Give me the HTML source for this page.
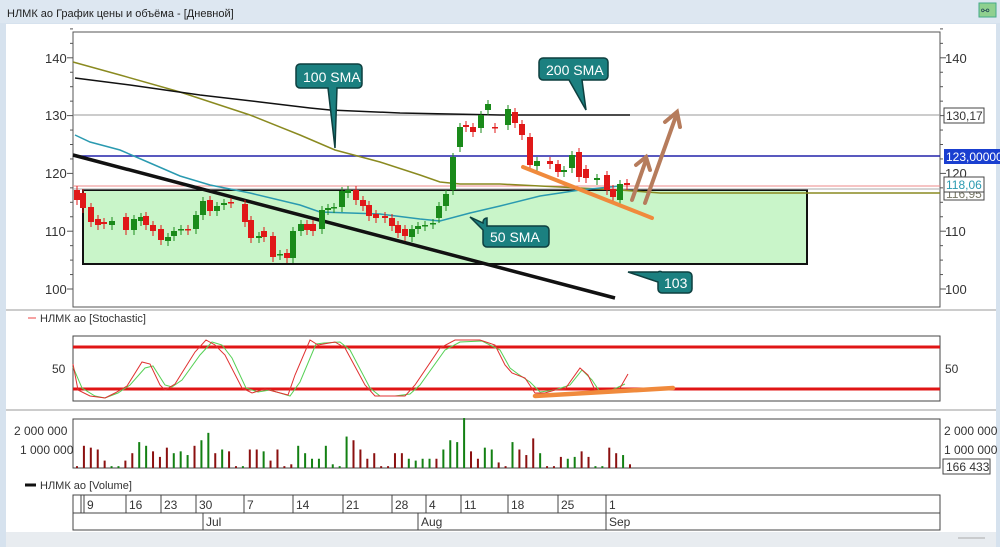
<!DOCTYPE html>
<html><head><meta charset="utf-8">
<style>
body{margin:0;width:1000px;height:547px;overflow:hidden;background:#d9e4ef;font-family:"Liberation Sans","Noto Sans CJK SC",sans-serif;}
svg{position:absolute;left:0;top:0}
</style></head><body>
<svg id="s" width="1000" height="547" viewBox="0 0 1000 547" font-family="Liberation Sans, sans-serif">
<rect x="0" y="0" width="1000" height="547" fill="#d6e2ee"/>
<rect x="0" y="0" width="1000" height="23" fill="#dde7f1"/>
<text x="7" y="17" font-size="11" fill="#222">НЛМК ао График цены и объёма - [Дневной]</text>
<rect x="979" y="3" width="17" height="14" fill="#8fd08f" stroke="#4a8" />
<text x="981" y="14" font-size="10" fill="#245">⚯</text>
<rect x="6" y="24" width="990" height="508" fill="#fff"/>
<rect x="6" y="532" width="990" height="15" fill="#e8ecf0"/>
<line x1="958" y1="538" x2="985" y2="538" stroke="#aaa"/>
<!-- main chart -->
<rect x="73" y="32" width="867" height="275" fill="#fff" stroke="#555" stroke-width="1"/>
<line x1="6" y1="310" x2="996" y2="310" stroke="#ccc" stroke-width="2"/>
<line x1="6" y1="410" x2="996" y2="410" stroke="#ccc" stroke-width="2"/>
<g font-size="13" fill="#333">
<text x="45" y="63">140</text><text x="45" y="120">130</text><text x="45" y="178">120</text><text x="45" y="236">110</text><text x="45" y="294">100</text>
<text x="945" y="63">140</text><text x="945" y="178">120</text><text x="945" y="236">110</text><text x="945" y="294">100</text>
</g>
<g id="ticks" stroke="#555"></g>
<rect x="83" y="190" width="724" height="74" fill="#c9f5c9" stroke="#111" stroke-width="2"/>
<line x1="73" y1="115" x2="940" y2="115" stroke="#999"/>
<line x1="73" y1="156" x2="940" y2="156" stroke="#2222aa" stroke-width="1.5"/>
<line x1="73" y1="186" x2="940" y2="186" stroke="#e88" stroke-width="1"/>
<line x1="73" y1="189" x2="940" y2="189" stroke="#aaa" stroke-width="1"/>
<polyline fill="none" stroke="#8a8a20" stroke-width="1.5" points="73,62 120,75 180,92 250,115 300,135 335,150 380,162 420,175 440,182 460,184 500,184 540,186 580,188 620,190 660,193 940,193"/>
<polyline fill="none" stroke="#111" stroke-width="1.5" points="75,78 130,85 200,95 260,102 310,108 330,110 400,113 500,115 630,115"/>
<polyline fill="none" stroke="#2a9ab0" stroke-width="1.5" points="75,135 90,142 120,150 150,163 180,176 210,185 250,193 300,205 320,212 380,214 420,219 440,221 470,213 500,206 540,196 580,190 620,186"/>
<line x1="73" y1="155" x2="615" y2="298" stroke="#111" stroke-width="3.5"/>
<g id="candles"></g>
<line x1="523" y1="167" x2="652" y2="218" stroke="#f08a3c" stroke-width="4" stroke-linecap="round"/>
<g stroke="#b67c5c" stroke-width="4" fill="none" stroke-linecap="round">
<line x1="632" y1="200" x2="646" y2="160"/><polyline points="636,165 646,157 650,170"/>
<line x1="645" y1="203" x2="676" y2="116"/><polyline points="665,122 677,112 680,127"/>
</g>
<!-- callouts -->
<g fill="#1b8080" stroke="#0d3f3f" stroke-width="1.5">
<path d="M300,64 h58 a4,4 0 0 1 4,4 v16 a4,4 0 0 1 -4,4 h-21 l-2,60 l-7,-60 h-28 a4,4 0 0 1 -4,-4 v-16 a4,4 0 0 1 4,-4z"/>
<path d="M543,58 h61 a4,4 0 0 1 4,4 v14 a4,4 0 0 1 -4,4 h-22 l4,30 l-17,-30 h-26 a4,4 0 0 1 -4,-4 v-14 a4,4 0 0 1 4,-4z"/>
<path d="M487,226 h58 a4,4 0 0 1 4,4 v13 a4,4 0 0 1 -4,4 h-58 a4,4 0 0 1 -4,-4 v-13 l-13,-13 l13,6 v-1 a4,4 0 0 1 4,-4z"/>
<path d="M662,272 h26 a4,4 0 0 1 4,4 v13 a4,4 0 0 1 -4,4 h-26 a4,4 0 0 1 -4,-4 v-7 l-30,-10 h30 a4,4 0 0 1 4,0z"/>
</g>
<g fill="#fff" font-size="14">
<text x="303" y="82">100 SMA</text><text x="546" y="75">200 SMA</text><text x="490" y="242">50 SMA</text><text x="664" y="288">103</text>
</g>
<g font-size="12">
<rect x="944" y="108" width="40" height="15" fill="#fff" stroke="#444"/><text x="946" y="120" fill="#333">130,17</text>
<rect x="944" y="149" width="56" height="15" fill="#1a3fd0"/><text x="946" y="161" fill="#fff">123,00000</text>
<rect x="944" y="186" width="40" height="14" fill="#fff" stroke="#444"/><text x="946" y="198" fill="#776">116,95</text>
<rect x="944" y="177" width="40" height="15" fill="#fff" stroke="#444"/><text x="946" y="189" fill="#2a9ab0">118,06</text>
</g>
<!-- stochastic -->
<line x1="28" y1="318" x2="36" y2="318" stroke="#e44"/>
<text x="40" y="322" font-size="11" fill="#333">НЛМК ао [Stochastic]</text>
<rect x="73" y="336" width="867" height="65" fill="#fff" stroke="#444"/>
<line x1="73" y1="347" x2="940" y2="347" stroke="#e01515" stroke-width="3"/>
<line x1="73" y1="389" x2="940" y2="389" stroke="#e01515" stroke-width="3"/>
<text x="52" y="373" font-size="12" fill="#333">50</text><text x="945" y="373" font-size="12" fill="#333">50</text>
<polyline fill="none" stroke="#55d055" stroke-width="1" points="73,367 82,388 95,396 105,398 118,393 130,385 145,368 153,366 165,385 172,387 182,380 200,355 212,342 222,345 232,358 246,388 258,392 270,390 290,396 300,382 316,344 324,343 340,342 350,350 370,388 380,396 395,396 410,394 420,385 445,350 460,342 482,341 500,350 510,368 518,374 530,382 540,392 555,390 570,385 582,370 592,380 600,392 612,390 625,384"/>
<polyline fill="none" stroke="#e03030" stroke-width="1" points="73,364 78,390 90,396 105,398 115,393 127,386 142,362 150,364 160,385 165,390 175,384 195,352 206,340 215,345 225,355 242,388 252,393 265,389 288,395 295,375 310,340 318,345 335,342 345,348 365,385 375,396 390,396 405,396 415,385 440,348 455,340 480,340 495,345 505,365 512,373 525,378 535,393 545,393 555,390 565,389 580,368 588,375 595,390 605,392 620,388 628,374"/>
<line x1="535" y1="396" x2="673" y2="388" stroke="#f08a3c" stroke-width="4.5" stroke-linecap="round"/>
<!-- volume -->
<rect x="73" y="419" width="867" height="49" fill="#fff" stroke="#444"/>
<g font-size="12" fill="#333"><text x="14" y="435">2 000 000</text><text x="20" y="454">1 000 000</text>
<text x="944" y="435">2 000 000</text><text x="944" y="454">1 000 000</text></g>
<rect x="943" y="459" width="47" height="15" fill="#fff" stroke="#444"/><text x="946" y="471" font-size="12" fill="#333">166 433</text>
<g id="vol"></g>
<line x1="25" y1="485" x2="36" y2="485" stroke="#111" stroke-width="3"/>
<text x="40" y="489" font-size="11" fill="#333">НЛМК ао [Volume]</text>
<!-- dates -->
<rect x="73" y="495" width="867" height="35" fill="#fff" stroke="#444"/>
<line x1="73" y1="513" x2="940" y2="513" stroke="#444"/>
<g id="dates" font-size="12" fill="#333" stroke="none"></g>
</svg>
<script>
var NS="http://www.w3.org/2000/svg";
function el(p,t,a){var e=document.createElementNS(NS,t);for(var k in a)e.setAttribute(k,a[k]);document.getElementById(p).appendChild(e);return e;}
for(var v=100;v<=145;v+=2.5){var y=289-(v-100)*5.78;var L=(v%10==0)?6:3;el('ticks','line',{x1:73-L,x2:73,y1:y,y2:y});el('ticks','line',{x1:940,x2:940+L,y1:y,y2:y});}
var c=[[77,'r',190,200],[83,'r',193,208],[91,'r',207,222],[98,'r',219,225],[104,'r',222,224],[112,'g',221,225],[126,'r',217,230],[134,'g',219,230],[141,'g',217,221],[146,'r',216,225],[153,'r',225,231],[161,'r',229,240],[168,'g',237,241],[174,'g',231,236],[181,'g',229,230],[188,'r',229,230],[196,'g',215,229],[203,'g',201,215],[210,'r',200,211],[217,'g',206,211],[224,'g',203,205],[231,'r',202,203],[245,'r',204,222],[251,'r',220,238],[259,'g',236,238],[264,'r',231,237],[273,'r',236,257],[280,'g',254,255],[287,'r',253,258],[293,'g',231,258],[301,'g',224,231],[307,'r',224,230],[313,'r',224,231],[322,'g',210,229],[328,'g',208,210],[334,'g',207,208],[342,'g',191,207],[348,'g',190,193],[356,'r',190,200],[363,'r',200,206],[369,'r',205,216],[376,'r',214,218],[385,'r',216,218],[392,'r',218,226],[398,'r',225,233],[405,'r',229,236],[412,'g',229,237],[418,'g',226,229],[425,'g',225,226],[433,'g',223,224],[439,'g',206,218],[446,'g',194,206],[453,'g',157,190],[460,'g',127,147],[466,'r',125,127],[473,'r',127,132],[481,'g',115,128],[488,'g',104,110],[495,'r',127,128],[508,'g',109,125],[515,'r',112,123],[522,'r',124,135],[530,'r',137,165],[537,'g',161,166],[550,'r',161,164],[558,'r',164,172],[564,'g',170,172],[572,'g',155,168],[579,'r',152,177],[586,'r',169,178],[597,'g',178,180],[607,'r',175,190],[613,'r',189,197],[620,'g',184,200],[627,'r',183,185]];
c.forEach(function(d){var col=d[1]=='r'?'#e01818':'#1a8a1a';el('candles','line',{x1:d[0],x2:d[0],y1:d[2]-4,y2:d[3]+5,stroke:col});el('candles','rect',{x:d[0]-3,y:d[2],width:6,height:Math.max(1.5,d[3]-d[2]),fill:col});});
var vs="0.1r 1.2r 1.1r 1.0r 0.4r 0.1g 0.1g 0.4r 0.8r 1.4g 1.2g 0.9r 0.6r 1.1r 0.8g 0.9g 0.7g 1.2r 1.5g 1.9g 0.8r 1.0g 0.9r 0.1r 0.1g 1.0r 1.0r 0.9g 0.4r 1.0r 0.1r 0.2r 1.2g 0.8g 0.5g 0.5g 1.2g 0.2g 0.1g 1.7g 1.5r 1.0r 0.5r 0.8r 0.1r 0.1r 0.8r 0.8r 0.5g 0.4g 0.5g 0.5g 0.5r 1.0g 1.5g 1.4g 2.7g 0.9r 0.5r 1.1g 1.0g 0.3r 0.1r 1.4g 1.0r 0.7r 1.6r 0.8g 0.1r 0.1r 0.6r 0.5g 0.6g 0.9r 0.6r 0.1g 0.1g 1.1r 0.8r 0.7g 0.2r".split(" ");
vs.forEach(function(s,i){var x=77+i*(553/(vs.length-1));var h=parseFloat(s)*18.5;el('vol','rect',{x:x-1,y:468-h,width:2,height:h,fill:s.slice(-1)=='r'?'#8b1010':'#138013'});});
var dt=[[81,''],[84,'9'],[126,'16'],[161,'23'],[196,'30'],[244,'7'],[293,'14'],[343,'21'],[392,'28'],[426,'4'],[461,'11'],[508,'18'],[558,'25'],[606,'1']];
dt.forEach(function(d){el('dates','line',{x1:d[0],x2:d[0],y1:495,y2:513,stroke:'#444'});var t=el('dates','text',{x:d[0]+3,y:509});t.textContent=d[1];});
[[203,'Jul'],[418,'Aug'],[606,'Sep']].forEach(function(d){el('dates','line',{x1:d[0],x2:d[0],y1:513,y2:530,stroke:'#444'});var t=el('dates','text',{x:d[0]+3,y:526});t.textContent=d[1];});
</script>
</body></html>
